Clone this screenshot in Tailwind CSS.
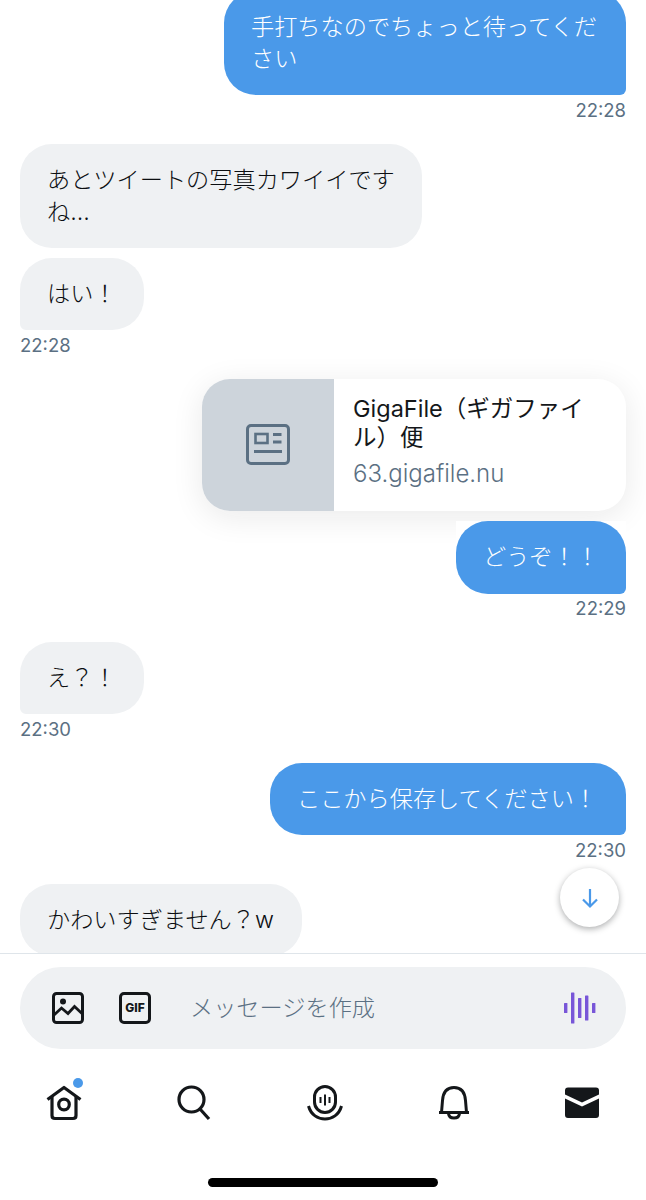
<!DOCTYPE html>
<html lang="ja">
<head>
  <meta charset="UTF-8" />
  <meta name="viewport" content="width=device-width, initial-scale=1.0"/>
  <title>Messages</title>
  <script src="https://cdn.jsdelivr.net/npm/@tailwindcss/browser@4"></script>
</head>
<body class="bg-white font-['Inter','Noto_Sans_CJK_JP',sans-serif]">
  <div class="relative flex h-[1200px] w-[646px] flex-col overflow-hidden">

    <!-- Conversation -->
    <main class="relative h-[953px] shrink-0 overflow-hidden px-5 text-[23.2px] leading-8 font-light">
      <div class="-mt-[9px] ml-auto w-[402px] rounded-[32px] rounded-br-[6px] bg-[#4a99e9] py-5 pr-5 pl-[27px] text-white">手打ちなのでちょっと待ってください</div>
      <div class="mt-[4px] text-right text-[18.5px] leading-[22px] font-normal text-[#5b7083]">22:28</div>

      <div class="mt-[23px] w-[402px] rounded-[32px] bg-[#eff1f3] py-5 pr-5 pl-[27px] text-[#0b0e11]">あとツイートの写真カワイイですね...</div>
      <div class="mt-[10px] w-[124px] rounded-[32px] rounded-bl-[6px] bg-[#eff1f3] py-5 pl-[27px] whitespace-nowrap text-[#0b0e11]">はい！</div>
      <div class="mt-[4px] text-[18.5px] leading-[22px] font-normal text-[#5b7083]">22:28</div>

      <!-- Link card -->
      <div class="mt-[23px] ml-auto flex h-[132px] w-[424px] overflow-hidden rounded-[28px] bg-white shadow-[0_6px_32px_rgba(20,23,26,0.09)]">
        <div class="flex w-[132px] shrink-0 items-center justify-center bg-[#cdd4db]">
          <svg class="h-[42px] w-[44px]" viewBox="0 0 44 42" fill="none" stroke="#5b7083" stroke-width="3">
            <rect x="1.5" y="1.5" width="41" height="38" rx="3.5"/>
            <rect x="9.5" y="10" width="12" height="9" stroke-width="2.6"/>
            <path d="M27 10.5h8.5M27 18h8.5M8 27.5h28" stroke-width="3"/>
          </svg>
        </div>
        <div class="min-w-0 flex-1 pt-[15px] pr-4 pl-[19px]">
          <div class="text-[23.5px] leading-[29px] font-normal text-[#14171a]">GigaFile（ギガファイル）便</div>
          <div class="mt-[7px] text-[24px] leading-[30px] text-[#5b7083]">63.gigafile.nu</div>
        </div>
      </div>

      <div class="relative mt-[10px] ml-auto w-[170px] bg-white">
        <div class="rounded-[32px] rounded-br-[6px] bg-[#4a99e9] pt-5 pb-[21px] pl-[27px] whitespace-nowrap text-white">どうぞ！！</div>
      </div>
      <div class="mt-[3px] text-right text-[18.5px] leading-[22px] font-normal text-[#5b7083]">22:29</div>

      <div class="mt-[23px] w-[124px] rounded-[32px] rounded-bl-[6px] bg-[#eff1f3] py-5 pl-[27px] whitespace-nowrap text-[#0b0e11]">え？！</div>
      <div class="mt-[4px] text-[18.5px] leading-[22px] font-normal text-[#5b7083]">22:30</div>

      <div class="mt-[23px] ml-auto w-[356px] rounded-[32px] rounded-br-[6px] bg-[#4a99e9] py-5 pl-[27px] whitespace-nowrap text-white">ここから保存してください！</div>
      <div class="mt-[4px] text-right text-[18.5px] leading-[22px] font-normal text-[#5b7083]">22:30</div>

      <div class="mt-[23px] w-[282px] rounded-[32px] bg-[#eff1f3] py-5 pl-[27px] whitespace-nowrap text-[#0b0e11]">かわいすぎません？w</div>

      <!-- Jump to latest -->
      <button class="absolute top-[868px] left-[560px] flex h-[59px] w-[59px] items-center justify-center rounded-full bg-white shadow-[0_2px_6px_rgba(20,23,26,0.35)]">
        <svg class="h-[22px] w-[22px]" viewBox="0 0 22 22" fill="none" stroke="#4a99e9" stroke-width="2.2">
          <path d="M11 2v17M4 12.5l7 7 7-7"/>
        </svg>
      </button>
    </main>

    <!-- Composer -->
    <div class="border-t border-[#dfe5ea] px-5 pt-[13px]">
      <div class="flex h-[82px] items-center rounded-[41px] bg-[#eff1f3] pr-[30px] pl-8">
        <svg class="h-[32px] w-[32px] shrink-0" viewBox="0 0 32 32" fill="none" stroke="#14171a" stroke-width="3">
          <rect x="1.5" y="1.5" width="29" height="29" rx="3"/>
          <circle cx="11" cy="9.5" r="3" fill="#14171a" stroke="none"/>
          <path d="M2 23l7.5-7 6.5 5.5 6.5-7 8 7.5" stroke-width="2.8"/>
        </svg>
        <div class="ml-[35px] flex h-[32px] w-[32px] shrink-0 items-center justify-center rounded-[5px] border-[3px] border-[#14171a] text-[12px] leading-none font-extrabold text-[#14171a]">GIF</div>
        <div class="ml-[39px] flex-1 text-[23.2px] font-light text-[#5b7083]">メッセージを作成</div>
        <svg class="h-[32px] w-[32px] shrink-0" viewBox="0 0 32 32" fill="#7856d8">
          <rect x="0" y="11" width="3.4" height="10" rx="0.6"/>
          <rect x="7" y="0.5" width="3.4" height="31" rx="0.6"/>
          <rect x="14" y="6" width="3.4" height="20" rx="0.6"/>
          <rect x="21" y="3.5" width="3.4" height="25" rx="0.6"/>
          <rect x="28" y="11" width="3.4" height="10" rx="0.6"/>
        </svg>
      </div>
    </div>

    <!-- Tab bar -->
    <nav class="mt-[36px] flex h-[36px] items-center justify-between pr-[47px] pl-[46px]">
      <a class="relative block h-[36px] w-[36px]">
        <svg class="h-[36px] w-[36px]" viewBox="0 0 36 36" fill="none" stroke="#14171a" stroke-width="3.2">
          <path d="M1.5 14.500L18 2.500 34.500 14.500" stroke-linejoin="round"/>
          <path d="M6 11.500v19q0 3 3 3h18q3 0 3-3v-19"/>
          <circle cx="18" cy="19.500" r="5.300"/>
        </svg>
        <span class="absolute -top-[7px] left-[27px] h-[10px] w-[10px] rounded-full bg-[#4a99e9]"></span>
      </a>
      <a class="block h-[36px] w-[34px]">
        <svg class="h-[36px] w-[34px]" viewBox="0 0 34 36" fill="none" stroke="#14171a" stroke-width="3.200">
          <circle cx="14.500" cy="14.500" r="12.500"/>
          <path d="M23 24l9 10"/>
        </svg>
      </a>
      <a class="block h-[36px] w-[36px]">
        <svg class="h-[36px] w-[36px]" viewBox="0 0 36 36" fill="none" stroke="#14171a" stroke-width="3">
          <rect x="7.500" y="1.500" width="21" height="26" rx="10.500"/>
          <path d="M1.500 21C4 30 11 34 18 34S32 30 34.500 21"/>
          <path d="M13.500 12v6M18 9.500v11M22.500 12v6" stroke-width="2"/>
        </svg>
      </a>
      <a class="block h-[36px] w-[32px]">
        <svg class="h-[36px] w-[32px]" viewBox="0 0 32 36" fill="none" stroke="#14171a" stroke-width="3">
          <path d="M1 27.500h30M3.500 27.500l1-12q1-13 11.500-13t11.500 13l1 12"/>
          <path d="M10.500 28.500q.5 4.500 5.500 4.500t5.500-4.500"/>
        </svg>
      </a>
      <a class="block h-[32px] w-[34px]">
        <svg class="h-[32px] w-[34px]" viewBox="0 0 34 32">
          <path fill="#14171a" d="M3 .5h28q3 0 3 3V7.500L17 15.500 0 7.500V3.500q0-3 3-3zM0 11.500l17 8 17-8V28q0 3-3 3H3q-3 0-3-3z"/>
        </svg>
      </a>
    </nav>

    <!-- Home indicator -->
    <div class="mx-auto mt-[57px] h-[9px] w-[230px] rounded-full bg-black"></div>
  </div>
</body>
</html>
